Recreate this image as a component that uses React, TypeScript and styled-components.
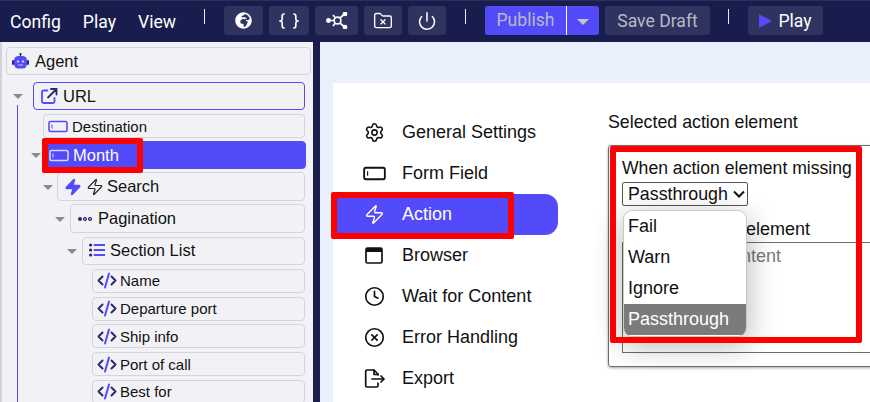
import React from 'react';
import styled, { createGlobalStyle } from 'styled-components';
import { Settings, Zap, Clock, CircleX, Power, FolderX } from 'lucide-react';
import { FaGlobeAfrica } from 'react-icons/fa';

const GlobalStyle = createGlobalStyle`
    html, body {
        margin: 0;
        padding: 0;
        width: 870px;
        height: 402px;
        overflow: hidden;
        background: #ffffff;
        font-family: "Liberation Sans", Arial, sans-serif;
    }
`;

const Page = styled.div`
    width: 870px;
    height: 402px;
    display: flex;
    flex-direction: column;
    overflow: hidden;
`;

const TopBar = styled.header`
    height: 42px;
    flex-shrink: 0;
    background: #191d4d;
    border-top: 1px solid #2c3059;
    box-sizing: border-box;
    display: flex;
    align-items: center;
    padding-left: 10px;
    color: #ffffff;
    font-family: Roboto, sans-serif;
    font-size: 17.6px;
`;

const MenuItem = styled.span<{ $gap: number }>`
    margin-right: ${(p) => p.$gap}px;
`;

const Tick = styled.span<{ $left: number; $right: number }>`
    width: 1px;
    height: 15px;
    background: #e6ecfb;
    margin: -11px ${(p) => p.$right}px 0 ${(p) => p.$left}px;
`;

const IconButton = styled.button<{ $w: number }>`
    width: ${(p) => p.$w}px;
    height: 29px;
    margin: 0 6px 2px 0;
    padding: 0;
    border: none;
    border-radius: 3px;
    background: #2f3360;
    color: #ffffff;
    display: flex;
    align-items: center;
    justify-content: center;
`;

const PublishGroup = styled.div`
    width: 114px;
    height: 29px;
    margin: 0 6px 2px 0;
    border-radius: 3px;
    background: #534bfa;
    display: flex;
    align-items: center;
    color: #b9b9c6;
`;

const PublishLabel = styled.span`
    width: 82px;
    height: 100%;
    line-height: 29px;
    text-align: center;
    border-right: 1px solid #ffffff;
    box-sizing: border-box;
`;

const Caret = styled.span<{ $color: string }>`
    width: 0;
    height: 0;
    margin-top: 2px;
    border-left: 6px solid transparent;
    border-right: 6px solid transparent;
    border-top: 6px solid ${(p) => p.$color};
`;

const CaretSlot = styled.span`
    flex: 1;
    display: flex;
    justify-content: center;
`;

const TextButton = styled.div<{ $w: number; $dim?: boolean }>`
    width: ${(p) => p.$w}px;
    height: 29px;
    margin-bottom: 2px;
    border-radius: 3px;
    background: #2f3360;
    color: ${(p) => (p.$dim ? '#b9b9c6' : '#ffffff')};
    display: flex;
    align-items: center;
    justify-content: center;
    gap: 6px;
`;

const Body = styled.div`
    flex: 1;
    display: flex;
    min-height: 0;
`;

const TreePanel = styled.aside`
    width: 313px;
    flex-shrink: 0;
    box-sizing: border-box;
    background: #f2f2f6;
    border-left: 2px solid #d2d2dc;
    position: relative;
    padding: 5px 0 0 4px;
    overflow: hidden;
`;

const Divider = styled.div`
    width: 7px;
    flex-shrink: 0;
    background: #191d4d;
`;

const TreeLine = styled.div`
    position: absolute;
    left: 15px;
    top: 63px;
    bottom: 0;
    width: 1px;
    background: #534bfa;
`;

const RootRow = styled.div`
    width: 305px;
    height: 28px;
    box-sizing: border-box;
    margin-bottom: 7px;
    border: 1px solid #d4d4de;
    border-radius: 4px;
    display: flex;
    align-items: center;
    gap: 6px;
    padding-left: 5px;
    font-size: 16.5px;
    color: #111111;
`;

const TreeRow = styled.div<{
    $indent: number;
    $h: number;
    $after: number;
    $fs: number;
    $pad: number;
    $gap: number;
    $lift?: boolean;
    $active?: boolean;
    $focus?: boolean;
}>`
    position: relative;
    height: ${(p) => p.$h}px;
    box-sizing: border-box;
    margin-left: ${(p) => p.$indent}px;
    margin-right: ${(p) => (p.$active ? 7 : 8)}px;
    margin-bottom: ${(p) => p.$after}px;
    border: 1px solid ${(p) => (p.$active || p.$focus ? '#534bfa' : '#d4d4de')};
    border-radius: 4px;
    background: ${(p) => (p.$active ? '#534bfa' : 'transparent')};
    color: ${(p) => (p.$active ? '#ffffff' : '#111111')};
    display: flex;
    align-items: center;
    gap: ${(p) => p.$gap}px;
    padding-left: ${(p) => p.$pad}px;
    padding-bottom: ${(p) => (p.$lift ? 2 : 0)}px;
    font-size: ${(p) => p.$fs}px;
`;

const Toggle = styled.span<{ $left: number }>`
    position: absolute;
    left: ${(p) => p.$left}px;
    top: 50%;
    margin-top: -2px;
    width: 0;
    height: 0;
    border-left: 5px solid transparent;
    border-right: 5px solid transparent;
    border-top: 5px solid #8a8a8f;
`;

const ContentArea = styled.main`
    flex: 1;
    background: #e9effb;
    padding: 41px 0 0 13px;
    min-width: 0;
`;

const Card = styled.div`
    height: 100%;
    background: #ffffff;
    display: flex;
    position: relative;
`;

const SideNav = styled.nav`
    width: 225px;
    flex-shrink: 0;
    padding-top: 29px;
`;

const NavItem = styled.div<{ $active?: boolean }>`
    height: 41px;
    margin-left: 3px;
    padding-left: 26px;
    display: flex;
    align-items: center;
    gap: 16px;
    border-radius: 0 13px 13px 0;
    background: ${(p) => (p.$active ? '#534bfa' : 'transparent')};
    color: ${(p) => (p.$active ? '#ffffff' : '#111111')};
    font-size: 18px;
`;

const NavIcon = styled.span`
    width: 24px;
    display: flex;
    justify-content: center;
`;

const Detail = styled.section`
    flex: 1;
    padding: 29px 0 0 50px;
    min-width: 0;
`;

const DetailTitle = styled.div`
    font-size: 17.8px;
    line-height: 20px;
    color: #111111;
    margin-bottom: 13px;
    white-space: nowrap;
`;

const ActionBox = styled.div`
    height: 222px;
    width: 320px;
    box-sizing: border-box;
    border: 1px solid #6e6e6e;
    border-radius: 3px;
    box-shadow: 0 1px 3px rgba(0, 0, 0, 0.35);
    padding: 12px 0 0 13px;
`;

const FieldLabel = styled.div`
    font-size: 17.6px;
    line-height: 20px;
    color: #111111;
    white-space: nowrap;
`;

const SelectBox = styled.div`
    width: 126px;
    height: 24px;
    box-sizing: border-box;
    border: 1px solid #555555;
    border-radius: 2px;
    margin-top: 4px;
    padding-left: 5px;
    display: flex;
    align-items: center;
    justify-content: space-between;
    font-size: 17.8px;
    color: #111111;
`;

const SelectChevron = styled.svg`
    margin-right: 2px;
`;

const LowerLabel = styled(FieldLabel)`
    margin-top: 13px;
    padding-left: 124px;
    font-size: 18px;
`;

const InnerBox = styled.div`
    margin-top: 3px;
    height: 111px;
    width: 320px;
    box-sizing: border-box;
    border: 1px solid #6e6e6e;
    padding: 3px 0 0 0;
    font-size: 18px;
    line-height: 20px;
    color: #7a7a7a;
`;

const Placeholder = styled.div`
    padding-left: 99px;
`;

const Dropdown = styled.ul`
    position: absolute;
    left: 290px;
    top: 127px;
    width: 124px;
    height: 127px;
    box-sizing: border-box;
    margin: 0;
    padding: 0;
    list-style: none;
    background: #ffffff;
    border: 1px solid #c9c9c9;
    border-radius: 9px;
    box-shadow: 0 8px 30px rgba(0, 0, 0, 0.3);
    overflow: hidden;
    font-size: 18px;
    color: #111111;
`;

const DropdownItem = styled.li<{ $selected?: boolean }>`
    height: 31px;
    padding-left: 4px;
    line-height: 31px;
    background: ${(p) => (p.$selected ? '#7b7b7b' : 'transparent')};
    color: ${(p) => (p.$selected ? '#ffffff' : '#111111')};
`;

const Highlight = styled.div<{ $x: number; $y: number; $w: number; $h: number }>`
    position: absolute;
    left: ${(p) => p.$x}px;
    top: ${(p) => p.$y}px;
    width: ${(p) => p.$w}px;
    height: ${(p) => p.$h}px;
    box-sizing: border-box;
    border: 6px solid #ff0000;
    border-radius: 2px;
    pointer-events: none;
    z-index: 5;
`;

const PURPLE = '#534bfa';
const NAVY = '#2a2a6a';

const Braces = () => (
    <svg width="20" height="18" viewBox="0 0 20 18" fill="none" stroke="#fff" strokeWidth="1.7" strokeLinecap="round">
        <path d="M5 2C3.4 2 3.2 3 3.2 4.2v2.6C3.2 7.9 2.6 8.7 1.5 9c1.1.3 1.7 1.1 1.7 2.2v2.6c0 1.2.2 2.2 1.8 2.2" />
        <path d="M15 2c1.6 0 1.8 1 1.8 2.2v2.6c0 1.1.6 1.9 1.7 2.2-1.1.3-1.7 1.1-1.7 2.2v2.6c0 1.2-.2 2.2-1.8 2.2" />
    </svg>
);

const Graph = () => (
    <svg width="22" height="17" viewBox="0 0 22 17" fill="none" stroke="#fff" strokeWidth="1.7">
        <circle cx="11.5" cy="8.5" r="3.4" />
        <path d="M8 8.5H3M14 6 18.5 2M14 11 18.5 15M9 5.5 7 3M9 11.5 7 14" />
        <circle cx="2.5" cy="8.5" r="1.6" fill="#fff" />
        <circle cx="19" cy="2" r="1.5" fill="#fff" />
        <circle cx="19" cy="15" r="1.5" fill="#fff" />
    </svg>
);

const RobotIcon = () => (
    <svg width="17" height="16" viewBox="0 0 17 16">
        <path d="M8.5 0.5v3" stroke={NAVY} strokeWidth="1.2" />
        <circle cx="8.5" cy="1.2" r="1.1" fill={NAVY} />
        <rect x="2" y="3" width="13" height="12.5" rx="4.5" fill={PURPLE} />
        <rect x="0" y="7" width="2" height="5" rx="1" fill={NAVY} />
        <rect x="15" y="7" width="2" height="5" rx="1" fill={NAVY} />
        <circle cx="6" cy="8.5" r="1.2" fill="#c9c7ff" />
        <circle cx="11" cy="8.5" r="1.2" fill="#c9c7ff" />
        <path d="M6 12h5" stroke="#c9c7ff" strokeWidth="1" />
    </svg>
);

const LinkIcon = () => (
    <svg width="18" height="16" viewBox="0 0 18 16" fill="none" strokeWidth="1.8" strokeLinecap="round">
        <path d="M7.5 2.5H3.5A1.5 1.5 0 0 0 2 4v9.5A1.5 1.5 0 0 0 3.5 15H13a1.5 1.5 0 0 0 1.5-1.5V10" stroke={PURPLE} />
        <path d="M8 9.5 16 1.5M11 1h5.5v5.5" stroke={NAVY} />
    </svg>
);

const FieldIcon = ({ color, width = 20 }: { color: string; width?: number }) => (
    <svg width={width} height={width * 0.65} viewBox="0 0 20 13" fill="none">
        <rect x="1" y="1.5" width="18" height="10" rx="1.5" stroke={color} strokeWidth="1.6" />
        <path d="M4 4.5v4" stroke={color} strokeWidth="1" />
    </svg>
);

const BrowserIcon = () => (
    <svg width="18" height="17" viewBox="0 0 18 17" fill="none">
        <rect x="1" y="1" width="16" height="15" rx="1.5" stroke="#111" strokeWidth="1.7" />
        <rect x="1" y="1" width="16" height="4" fill="#111" />
    </svg>
);

const ExportIcon = () => (
    <svg width="21" height="19" viewBox="0 0 21 19" fill="none" stroke="#111" strokeWidth="1.7" strokeLinejoin="round" strokeLinecap="round">
        <path d="M14 6V5L10 1H3a1.3 1.3 0 0 0-1.3 1.3v14.4A1.3 1.3 0 0 0 3 18h9.7a1.3 1.3 0 0 0 1.3-1.3V14" />
        <path d="M10 1v4.5h4M8 10h12M17 7l3 3-3 3" />
    </svg>
);

const CodeIcon = () => (
    <svg width="20" height="17" viewBox="0 0 20 17" fill="none" strokeWidth="2" strokeLinecap="round" strokeLinejoin="round">
        <path d="M5.5 4.5 1.5 8.5l4 4M14.5 4.5l4 4-4 4" stroke={NAVY} />
        <path d="M12 1.5 8 15.5" stroke={PURPLE} />
    </svg>
);

const PaginationIcon = () => (
    <svg width="16" height="6" viewBox="0 0 16 6">
        <circle cx="3" cy="3" r="2" fill={NAVY} />
        <circle cx="8" cy="3" r="1.6" fill="#8f8ae8" stroke={NAVY} strokeWidth="1" />
        <circle cx="13" cy="3" r="1.6" fill="#8f8ae8" stroke={NAVY} strokeWidth="1" />
    </svg>
);

const ListIcon = () => (
    <svg width="16" height="14" viewBox="0 0 16 14">
        <circle cx="1.6" cy="2" r="1.6" fill={NAVY} />
        <circle cx="1.6" cy="7" r="1.6" fill={NAVY} />
        <circle cx="1.6" cy="12" r="1.6" fill={NAVY} />
        <path d="M5.5 2H15.5M5.5 7H15.5M5.5 12H15.5" stroke={PURPLE} strokeWidth="2" strokeLinecap="round" />
    </svg>
);

const sideItems = [
    { label: 'General Settings', icon: <Settings size={21} color="#111" strokeWidth={1.8} /> },
    { label: 'Form Field', icon: <FieldIcon color="#111" width={23} /> },
    { label: 'Action', icon: <Zap size={21} color="#fff" strokeWidth={1.6} />, active: true },
    { label: 'Browser', icon: <BrowserIcon /> },
    { label: 'Wait for Content', icon: <Clock size={21} color="#111" strokeWidth={1.9} /> },
    { label: 'Error Handling', icon: <CircleX size={21} color="#111" strokeWidth={1.9} /> },
    { label: 'Export', icon: <ExportIcon /> },
];

const fieldRows = ['Name', 'Departure port', 'Ship info', 'Port of call', 'Best for'];
const options = ['Fail', 'Warn', 'Ignore', 'Passthrough'];

export default function App() {
    return (
        <Page>
            <GlobalStyle />
            <TopBar>
                <MenuItem $gap={22}>Config</MenuItem>
                <MenuItem $gap={22}>Play</MenuItem>
                <MenuItem $gap={0}>View</MenuItem>
                <Tick $left={28} $right={19} />
                <IconButton $w={39}><FaGlobeAfrica size={17} /></IconButton>
                <IconButton $w={40}><Braces /></IconButton>
                <IconButton $w={43}><Graph /></IconButton>
                <IconButton $w={38}><FolderX size={20} strokeWidth={1.6} /></IconButton>
                <IconButton $w={38}><Power size={20} strokeWidth={1.8} /></IconButton>
                <Tick $left={13} $right={19} />
                <PublishGroup>
                    <PublishLabel>Publish</PublishLabel>
                    <CaretSlot><Caret $color="#c4c4cc" /></CaretSlot>
                </PublishGroup>
                <TextButton $w={105} $dim>Save Draft</TextButton>
                <Tick $left={18} $right={19} />
                <TextButton $w={75}>
                    <svg width="13" height="14" viewBox="0 0 13 14"><path d="M0 0v14l13-7z" fill={PURPLE} /></svg>
                    Play
                </TextButton>
            </TopBar>
            <Body>
                <TreePanel>
                    <TreeLine />
                    <RootRow><RobotIcon />Agent</RootRow>
                    <TreeRow $indent={27} $h={28} $after={4} $fs={16.5} $pad={6} $gap={5} $focus>
                        <Toggle $left={-21} />
                        <LinkIcon />URL
                    </TreeRow>
                    <TreeRow $indent={37} $h={24} $after={3} $fs={15} $pad={4} $gap={4}>
                        <FieldIcon color={PURPLE} />Destination
                    </TreeRow>
                    <TreeRow $indent={37} $h={28} $after={3} $fs={16.5} $pad={5} $gap={4} $active>
                        <Toggle $left={-13} />
                        <FieldIcon color="#d8d8f5" />Month
                    </TreeRow>
                    <TreeRow $indent={51} $h={29} $after={3} $fs={16.5} $pad={6} $gap={3.5}>
                        <Toggle $left={-15} />
                        <Zap size={18} color={PURPLE} fill={PURPLE} />
                        <Zap size={18} color="#222" strokeWidth={1.6} />Search
                    </TreeRow>
                    <TreeRow $indent={64} $h={29} $after={4} $fs={16.5} $pad={6} $gap={5}>
                        <Toggle $left={-16} />
                        <PaginationIcon />Pagination
                    </TreeRow>
                    <TreeRow $indent={76} $h={28} $after={4} $fs={16.5} $pad={6} $gap={5} $lift>
                        <Toggle $left={-16} />
                        <ListIcon />Section List
                    </TreeRow>
                    {fieldRows.map((name, i) => (
                        <TreeRow key={name} $indent={86} $h={24} $after={i === 1 ? 3 : 4} $fs={15} $pad={4} $gap={3} $lift={i !== 2 && i !== 3}>
                            <CodeIcon />{name}
                        </TreeRow>
                    ))}
                    <Highlight $x={40} $y={96} $w={101} $h={35} />
                </TreePanel>
                <Divider />
                <ContentArea>
                    <Card>
                        <SideNav>
                            {sideItems.map((item) => (
                                <NavItem key={item.label} $active={item.active}>
                                    <NavIcon>{item.icon}</NavIcon>
                                    {item.label}
                                </NavItem>
                            ))}
                        </SideNav>
                        <Detail>
                            <DetailTitle>Selected action element</DetailTitle>
                            <ActionBox>
                                <FieldLabel>When action element missing</FieldLabel>
                                <SelectBox>
                                    Passthrough
                                    <SelectChevron width="12" height="8" viewBox="0 0 12 8" fill="none" stroke="#111" strokeWidth="2">
                                        <path d="M1 1.5 6 6.5 11 1.5" />
                                    </SelectChevron>
                                </SelectBox>
                                <LowerLabel>element</LowerLabel>
                                <InnerBox><Placeholder>content</Placeholder></InnerBox>
                            </ActionBox>
                        </Detail>
                        <Dropdown>
                            {options.map((o) => (
                                <DropdownItem key={o} $selected={o === 'Passthrough'}>{o}</DropdownItem>
                            ))}
                        </Dropdown>
                        <Highlight $x={-2} $y={109} $w={183} $h={47} />
                        <Highlight $x={277} $y={63} $w={252} $h={197} />
                    </Card>
                </ContentArea>
            </Body>
        </Page>
    );
}
